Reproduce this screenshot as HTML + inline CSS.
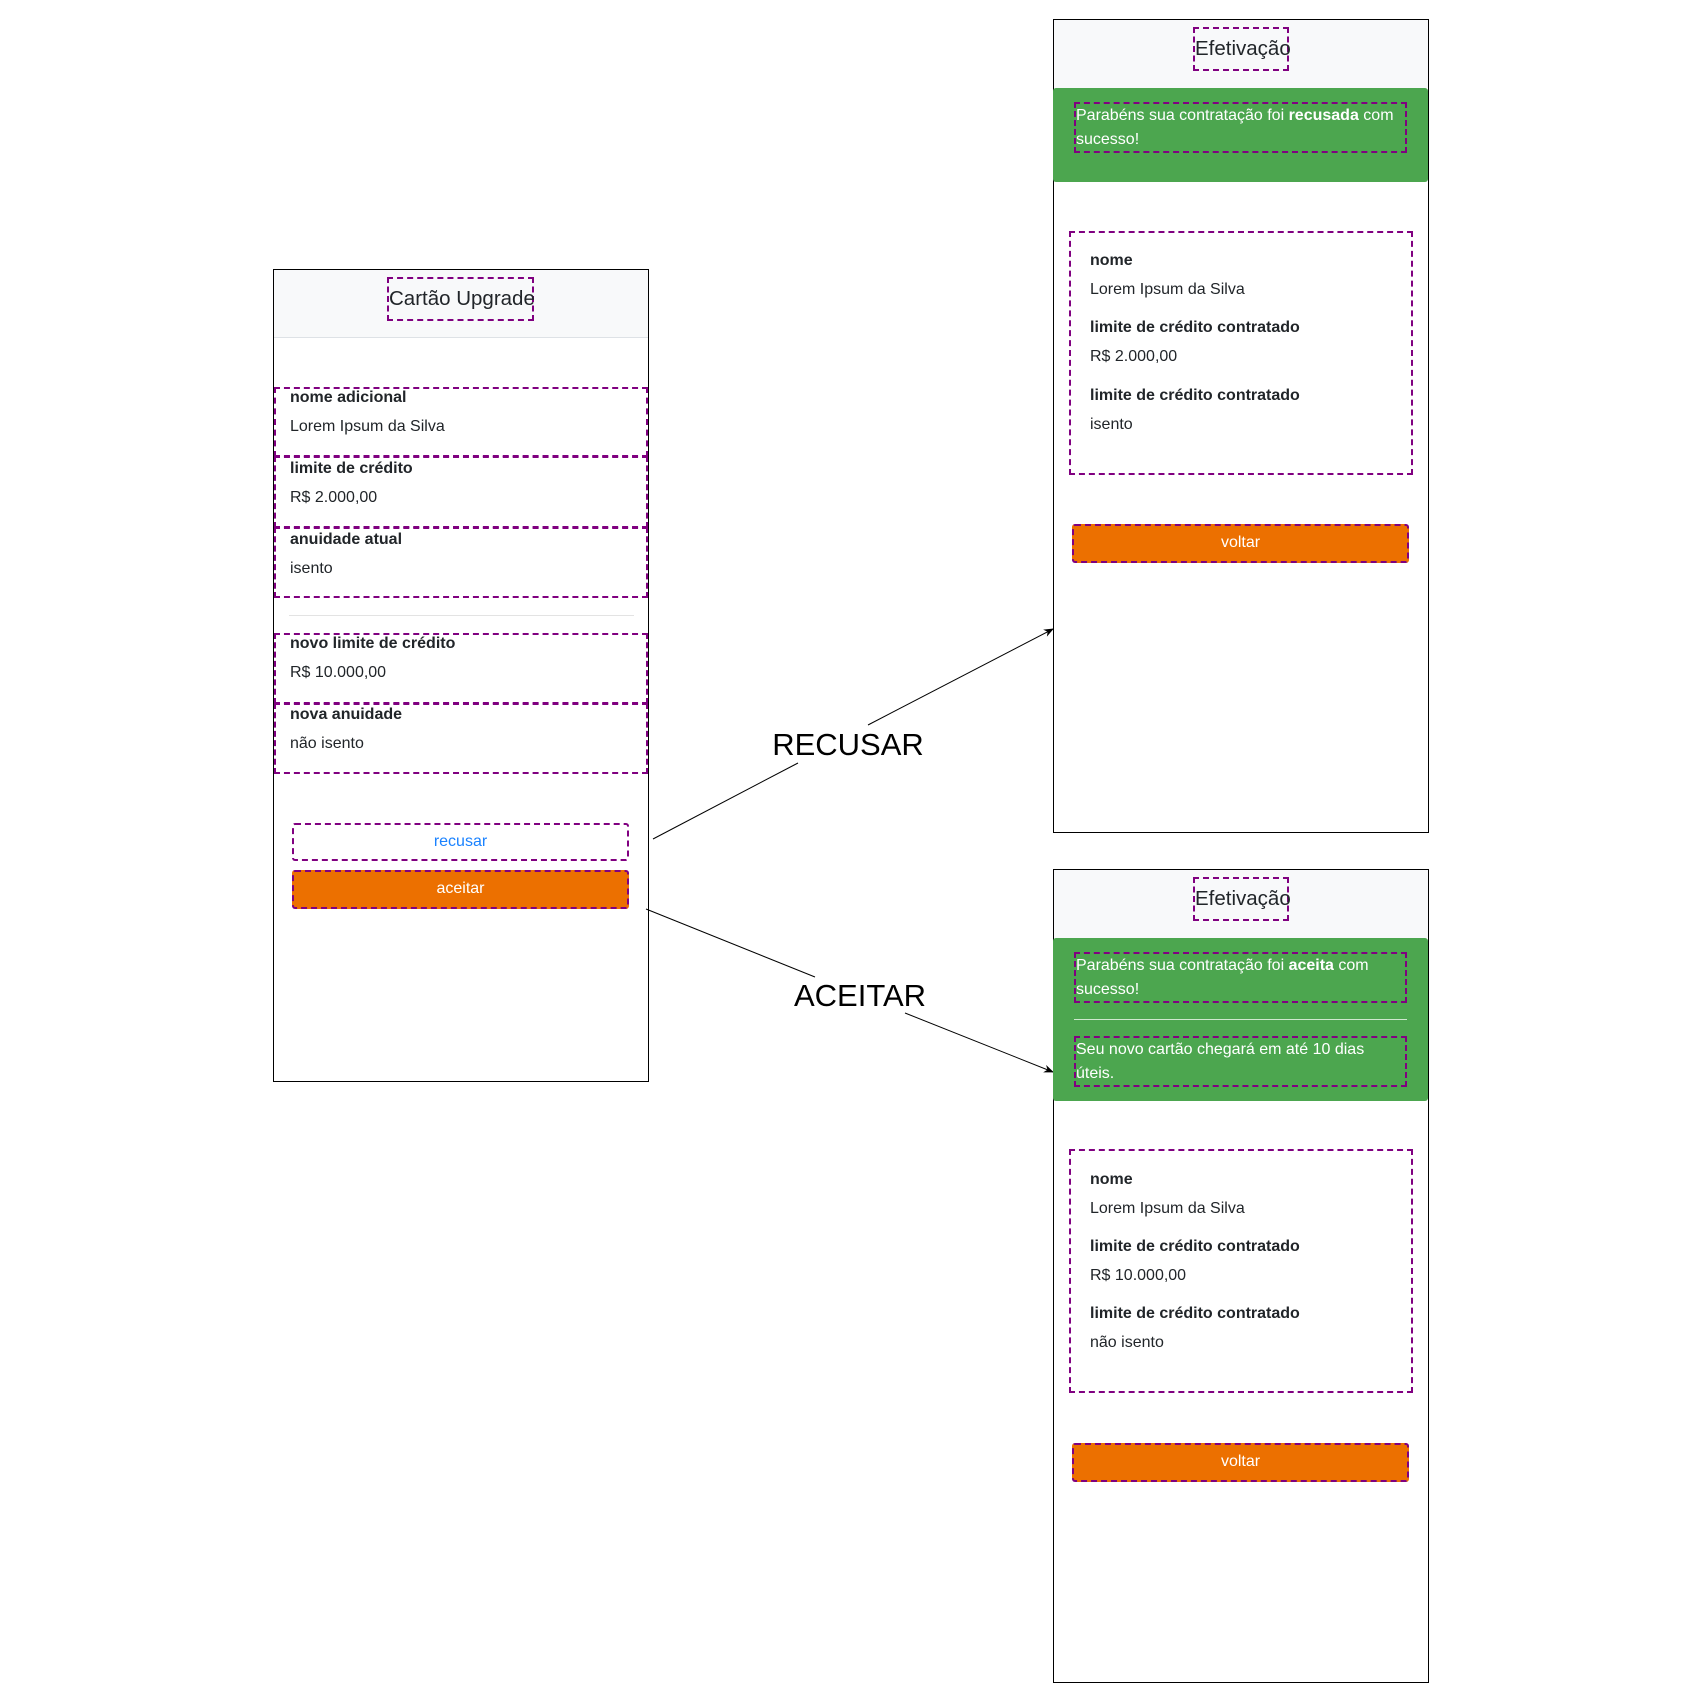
<!DOCTYPE html>
<html><head><meta charset="utf-8"><style>
body{margin:0;width:1700px;height:1700px;background:#fff;position:relative;font-family:"Liberation Sans",sans-serif;color:#212529;overflow:hidden}
.a{position:absolute;box-sizing:border-box}
.panel{border:1px solid #000;background:#fff}
.hdr{background:#f8f9fa;border-bottom:1px solid #dee2e6}
.dash{border:2px dashed #800080}
.t{position:absolute;font-size:16px;white-space:nowrap}
.b{font-weight:bold}
.title{font-size:20.5px;text-align:left;padding-left:0;line-height:40px;white-space:nowrap;overflow:visible}
.green{background:#4ca64f;border-radius:3px}
.msg{color:#fff;font-size:16px;line-height:24px;padding-left:0}
.btn{border-radius:3px;text-align:center;font-size:16px;line-height:34px}
.or{background:#ec7000;color:#fff}
</style></head><body>

<div class="a panel" style="left:273px;top:269px;width:376px;height:813px"></div>
<div class="a hdr" style="left:274px;top:270px;width:374px;height:68px"></div>
<div class="a dash title" style="left:387px;top:277px;width:147px;height:44px">Cartão Upgrade</div>

<div class="a dash" style="left:274px;top:387px;width:374px;height:70px"></div>
<div class="a dash" style="left:274px;top:456px;width:374px;height:72px"></div>
<div class="a dash" style="left:274px;top:527px;width:374px;height:71px"></div>
<div class="t b" style="left:290px;top:389px">nome adicional</div>
<div class="t" style="left:290px;top:418px">Lorem Ipsum da Silva</div>
<div class="t b" style="left:290px;top:460px">limite de crédito</div>
<div class="t" style="left:290px;top:489px">R$ 2.000,00</div>
<div class="t b" style="left:290px;top:531px">anuidade atual</div>
<div class="t" style="left:290px;top:560px">isento</div>
<div class="a" style="left:289px;top:615px;width:345px;height:1px;background:#e3e3e3"></div>
<div class="a dash" style="left:274px;top:633px;width:374px;height:71px"></div>
<div class="a dash" style="left:274px;top:703px;width:374px;height:71px"></div>
<div class="t b" style="left:290px;top:635px">novo limite de crédito</div>
<div class="t" style="left:290px;top:664px">R$ 10.000,00</div>
<div class="t b" style="left:290px;top:706px">nova anuidade</div>
<div class="t" style="left:290px;top:735px">não isento</div>
<div class="a dash btn" style="left:292px;top:823px;width:337px;height:38px;color:#1a82ff">recusar</div>
<div class="a dash btn or" style="left:292px;top:870px;width:337px;height:39px">aceitar</div>

<svg class="a" style="left:0;top:0" width="1700" height="1700">
<defs><marker id="m" markerWidth="10" markerHeight="8" refX="9" refY="4" orient="auto" markerUnits="userSpaceOnUse"><path d="M0,0 L10,4 L0,8 L3,4z" fill="#000"/></marker></defs>
<line x1="653" y1="839" x2="798" y2="763" stroke="#000" stroke-width="1"/>
<line x1="868" y1="725" x2="1053" y2="629" stroke="#000" stroke-width="1" marker-end="url(#m)"/>
<line x1="646" y1="909" x2="815" y2="977" stroke="#000" stroke-width="1"/>
<line x1="905" y1="1013" x2="1053" y2="1072" stroke="#000" stroke-width="1" marker-end="url(#m)"/>
<text x="848" y="755" font-family="Liberation Sans" font-size="31" text-anchor="middle" fill="#000">RECUSAR</text>
<text x="860" y="1006" font-family="Liberation Sans" font-size="31" text-anchor="middle" fill="#000">ACEITAR</text>
</svg>

<div class="a panel" style="left:1053px;top:19px;width:376px;height:814px"></div>
<div class="a hdr" style="left:1054px;top:20px;width:374px;height:68px;border:none"></div>
<div class="a dash title" style="left:1193px;top:27px;width:96px;height:44px">Efetivação</div>
<div class="a green" style="left:1053px;top:88px;width:375px;height:94px"></div>
<div class="a dash msg" style="left:1074px;top:102px;width:333px;height:51px">Parabéns sua contratação foi <b>recusada</b> com sucesso!</div>
<div class="a dash" style="left:1069px;top:231px;width:344px;height:244px"></div>
<div class="t b" style="left:1090px;top:252px">nome</div>
<div class="t" style="left:1090px;top:281px">Lorem Ipsum da Silva</div>
<div class="t b" style="left:1090px;top:319px">limite de crédito contratado</div>
<div class="t" style="left:1090px;top:348px">R$ 2.000,00</div>
<div class="t b" style="left:1090px;top:387px">limite de crédito contratado</div>
<div class="t" style="left:1090px;top:416px">isento</div>
<div class="a dash btn or" style="left:1072px;top:524px;width:337px;height:39px">voltar</div>

<div class="a panel" style="left:1053px;top:869px;width:376px;height:814px"></div>
<div class="a hdr" style="left:1054px;top:870px;width:374px;height:68px;border:none"></div>
<div class="a dash title" style="left:1193px;top:877px;width:96px;height:44px">Efetivação</div>
<div class="a green" style="left:1053px;top:938px;width:375px;height:163px"></div>
<div class="a dash msg" style="left:1074px;top:952px;width:333px;height:51px">Parabéns sua contratação foi <b>aceita</b> com sucesso!</div>
<div class="a" style="left:1074px;top:1019px;width:333px;height:1px;background:#cfe8cf"></div>
<div class="a dash msg" style="left:1074px;top:1036px;width:333px;height:51px;padding-right:30px">Seu novo cartão chegará em até 10 dias úteis.</div>
<div class="a dash" style="left:1069px;top:1149px;width:344px;height:244px"></div>
<div class="t b" style="left:1090px;top:1171px">nome</div>
<div class="t" style="left:1090px;top:1200px">Lorem Ipsum da Silva</div>
<div class="t b" style="left:1090px;top:1238px">limite de crédito contratado</div>
<div class="t" style="left:1090px;top:1267px">R$ 10.000,00</div>
<div class="t b" style="left:1090px;top:1305px">limite de crédito contratado</div>
<div class="t" style="left:1090px;top:1334px">não isento</div>
<div class="a dash btn or" style="left:1072px;top:1443px;width:337px;height:39px">voltar</div>

</body></html>
